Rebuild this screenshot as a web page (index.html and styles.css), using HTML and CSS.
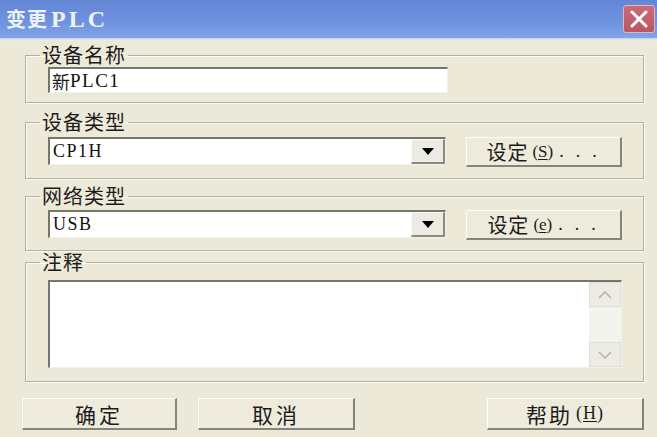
FILE: index.html
```html
<!DOCTYPE html>
<html lang="zh-CN">
<head>
<meta charset="utf-8">
<title>变更PLC</title>
<link rel="stylesheet" href="styles.css">
</head>
<body>
<div class="dialog">
  <div class="titlebar">
    <span class="title">变更<span class="title-lat">PLC</span></span>
    <button class="close" aria-label="关闭">
      <svg width="20" height="18" viewBox="0 0 20 18"><path d="M3 2 L17 16 M17 2 L3 16" stroke="#fff" stroke-width="3" stroke-linecap="round" fill="none"/></svg>
    </button>
  </div>
  <div class="strip"></div>
  <div class="content">
    <fieldset class="group g1">
      <legend>设备名称</legend>
      <div class="field name">新<span class="lat">PLC1</span></div>
    </fieldset>
    <fieldset class="group g2">
      <legend>设备类型</legend>
      <div class="row">
        <div class="combo"><span class="combo-text lat">CP1H</span><span class="drop"><svg width="12" height="7" viewBox="0 0 12 7"><path d="M0 0 H12 L6 7 Z" fill="#000"/></svg></span></div>
        <button class="btn set">设定<span class="mn">(<u>S</u>)</span><span class="dots">...</span></button>
      </div>
    </fieldset>
    <fieldset class="group g3">
      <legend>网络类型</legend>
      <div class="row">
        <div class="combo"><span class="combo-text lat">USB</span><span class="drop"><svg width="12" height="7" viewBox="0 0 12 7"><path d="M0 0 H12 L6 7 Z" fill="#000"/></svg></span></div>
        <button class="btn set">设定<span class="mn">(<u>e</u>)</span><span class="dots">...</span></button>
      </div>
    </fieldset>
    <fieldset class="group g4">
      <legend>注释</legend>
      <div class="memo">
        <textarea class="memo-text" aria-label="注释"></textarea>
        <div class="vscroll">
          <span class="sbtn"><svg width="14" height="8" viewBox="0 0 14 8"><path d="M1 7 L7 1 L13 7" stroke="#b4b3aa" stroke-width="1.6" fill="none"/></svg></span>
          <span class="track"></span>
          <span class="sbtn"><svg width="14" height="8" viewBox="0 0 14 8"><path d="M1 1 L7 7 L13 1" stroke="#b4b3aa" stroke-width="1.6" fill="none"/></svg></span>
        </div>
      </div>
    </fieldset>
    <div class="actions">
      <button class="btn act ok">确定</button>
      <button class="btn act cancel">取消</button>
      <button class="btn act help">帮助<span class="mn">(<u>H</u>)</span></button>
    </div>
  </div>
</div>
</body>
</html>
```

FILE: styles.css
```css
html, body {
  margin: 0;
  padding: 0;
  background: #ece9d8;
}
body {
  font-family: "Liberation Serif", "Noto Sans CJK SC", serif;
  color: #1c1c1c;
  width: 657px;
  height: 437px;
  overflow: hidden;
}
.titlebar {
  height: 38px;
  box-sizing: border-box;
  display: flex;
  align-items: center;
  justify-content: space-between;
  padding: 0 2px 0 6px;
  background: linear-gradient(#6386d6, #6f93de 60%, #80a5ea);
}
.title {
  color: #eef2fa;
  font-family: "Noto Sans CJK SC", sans-serif;
  font-weight: bold;
  font-size: 20px;
  letter-spacing: 1px;
  line-height: 24px;
}
.title-lat {
  font-family: "Liberation Serif", serif;
  font-size: 24px;
  letter-spacing: 3px;
  margin-left: 3px;
}
.close {
  width: 32px;
  height: 28px;
  padding: 0;
  border: 1px solid #e6b3b8;
  border-radius: 3px;
  background: linear-gradient(#c86c77, #bc5662);
  display: flex;
  align-items: center;
  justify-content: center;
}
.strip {
  height: 3px;
  background: linear-gradient(#c9d3e6, #f1efe3);
}
.content {
  padding: 4px 13px 0 22px;
}
.group {
  margin: 0 0 0 3px;
  padding: 0 21px 0 22px;
  border: 1px solid #b2b09f;
  box-shadow: inset 1px 1px 0 #fbfaf4, 1px 1px 0 #fbfaf4;
  min-width: 0;
}
.group legend {
  font-family: "Noto Sans CJK SC", sans-serif;
  font-size: 20px;
  line-height: 20px;
  letter-spacing: 1px;
  padding: 0 2px 0 2px;
  margin-left: -8px;
  color: #1c1c1c;
}
.g1 { padding-top: 2px; padding-bottom: 9px; }
.g2 { margin-top: 9px; padding-top: 5px; padding-bottom: 11px; }
.g3 { margin-top: 7px; padding-top: 4px; padding-bottom: 10px; }
.g4 { margin-top: 1px; padding-top: 8px; padding-bottom: 13px; }

.lat {
  font-family: "Liberation Serif", serif;
  font-size: 19px;
  letter-spacing: 1.5px;
  color: #111;
}
.field {
  width: 400px;
  height: 26px;
  box-sizing: border-box;
  background: #fff;
  border-top: 2px solid #77766b;
  border-left: 2px solid #77766b;
  border-right: 1px solid #f3f2ea;
  border-bottom: 1px solid #f3f2ea;
  font-family: "Noto Sans CJK SC", sans-serif;
  font-size: 18px;
  line-height: 22px;
  padding-left: 2px;
  display: flex;
  align-items: center;
}
.row {
  display: flex;
  align-items: flex-start;
  gap: 20px;
}
.combo {
  width: 404px;
  height: 28px;
  box-sizing: border-box;
  background: #fff;
  border-top: 2px solid #77766b;
  border-left: 2px solid #77766b;
  border-right: 1px solid #f3f2ea;
  border-bottom: 1px solid #f3f2ea;
  display: flex;
  align-items: stretch;
}
.combo-text {
  flex: 1;
  padding-left: 3px;
  line-height: 25px;
  font-size: 18px;
}
.drop {
  width: 34px;
  box-sizing: border-box;
  background: #ecebe3;
  border-top: 1px solid #fbfaf5;
  border-left: 1px solid #fbfaf5;
  border-right: 2px solid #8a897e;
  border-bottom: 2px solid #8a897e;
  display: flex;
  align-items: center;
  justify-content: center;
}
.btn {
  box-sizing: border-box;
  background: #eeebdc;
  border-top: 1px solid #fdfcf6;
  border-left: 1px solid #fdfcf6;
  border-right: 2px solid #85847a;
  border-bottom: 2px solid #85847a;
  padding: 0;
  font-family: "Noto Sans CJK SC", sans-serif;
  color: #1c1c1c;
  display: flex;
  align-items: center;
  justify-content: center;
}
.set {
  width: 158px;
  height: 30px;
  font-size: 20px;
  letter-spacing: 1px;
  padding-left: 8px;
}
.mn {
  font-family: "Liberation Serif", serif;
  font-size: 17px;
  letter-spacing: 0;
  margin-left: 4px;
}
.mn u {
  text-underline-offset: 2px;
}
.dots {
  font-family: "Liberation Serif", serif;
  font-size: 18px;
  letter-spacing: 12px;
  margin-left: 6px;
}
.memo {
  height: 88px;
  box-sizing: border-box;
  background: #fff;
  border-top: 2px solid #77766b;
  border-left: 2px solid #77766b;
  border-right: 1px solid #f3f2ea;
  border-bottom: 1px solid #f3f2ea;
  display: flex;
}
.memo-text {
  flex: 1;
  border: 0;
  padding: 0;
  margin: 0;
  resize: none;
  outline: none;
  background: #fff;
}
.vscroll {
  width: 32px;
  display: flex;
  flex-direction: column;
  background: #f4f4ef;
}
.sbtn {
  height: 25px;
  box-sizing: border-box;
  background: #ecece5;
  border: 1px solid #e0dfd6;
  display: flex;
  align-items: center;
  justify-content: center;
}
.track {
  flex: 1;
}
.actions {
  display: flex;
  margin-top: 16px;
}
.act {
  height: 32px;
  font-size: 21px;
  letter-spacing: 3px;
}
.ok { width: 155px; }
.cancel { width: 157px; margin-left: 21px; }
.help { width: 157px; margin-left: auto; letter-spacing: 2px; }
.help .mn { font-size: 18px; letter-spacing: 1px; }
```
